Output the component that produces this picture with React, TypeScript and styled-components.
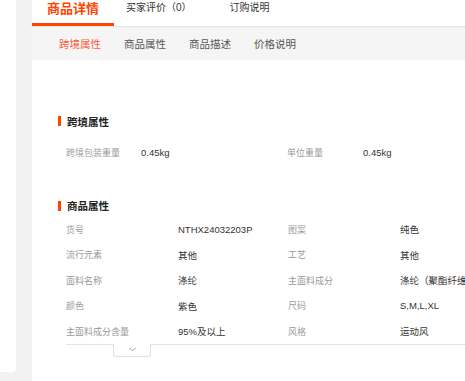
import styled, { createGlobalStyle } from "styled-components";

const GlobalStyle = createGlobalStyle`
  html, body {
    margin: 0;
    padding: 0;
    background: #f2f2f2;
    font-family: "Liberation Sans", "Noto Sans CJK SC", sans-serif;
  }
`;

const Page = styled.div`
  display: flex;
  gap: 16px;
  height: 100vh;
  overflow: hidden;
`;

const SideCard = styled.div`
  width: 16px;
  height: 372px;
  background: #fff;
  border-bottom-right-radius: 4px;
  flex-shrink: 0;
`;

const Main = styled.div`
  flex: 1;
  min-width: 0;
  background: #fff;
  display: flex;
  flex-direction: column;
  overflow: hidden;
`;

const TabBar = styled.div`
  display: flex;
  height: 26px;
  border-bottom: 1px solid #e3e3e3;
  flex-shrink: 0;
`;

const Tab = styled.div<{ $active?: boolean; $offset?: number }>`
  box-sizing: border-box;
  height: 26px;
  margin-left: ${(p) => p.$offset ?? 0}px;
  padding: ${(p) => (p.$active ? "0 15px" : "0")};
  font-size: ${(p) => (p.$active ? "13px" : "10px")};
  font-weight: ${(p) => (p.$active ? 700 : 400)};
  line-height: ${(p) => (p.$active ? "18px" : "16px")};
  color: ${(p) => (p.$active ? "#ff4400" : "#333")};
  border-bottom: ${(p) => (p.$active ? "3px solid #ff4400" : "none")};
  white-space: nowrap;
`;

const SubBar = styled.div`
  display: flex;
  align-items: center;
  gap: 23px;
  height: 33px;
  padding-left: 27px;
  background: #f5f5f5;
  flex-shrink: 0;
`;

const SubTab = styled.div<{ $active?: boolean }>`
  font-size: 10.5px;
  color: ${(p) => (p.$active ? "#ff5a3c" : "#555")};
  white-space: nowrap;
`;

const Section = styled.div<{ $top: number }>`
  margin-top: ${(p) => p.$top}px;
  padding-left: 26px;
`;

const Title = styled.div`
  display: flex;
  align-items: center;
  gap: 6px;
  height: 14px;
  font-size: 10.5px;
  font-weight: 700;
  color: #222;

  &::before {
    content: "";
    width: 3px;
    height: 10px;
    background: #ff4400;
  }
`;

const Grid = styled.div<{ $cols: string; $gap: number }>`
  display: grid;
  grid-template-columns: ${(p) => p.$cols};
  grid-auto-rows: 25.5px;
  align-items: center;
  margin-top: ${(p) => p.$gap}px;
  padding-left: 8px;
  white-space: nowrap;
`;

const Label = styled.div`
  font-size: 9px;
  color: #9a9a9a;
`;

const Value = styled.div`
  font-size: 9.5px;
  color: #333;
  overflow: hidden;
`;

const Footer = styled.div`
  margin-left: 34px;
  border-top: 1px solid #e3e3e3;
`;

const MoreTab = styled.div`
  box-sizing: border-box;
  width: 38px;
  height: 13px;
  margin: -1px 0 0 47px;
  background: #fff;
  border: 1px solid #e0e0e0;
  border-top: none;
  border-radius: 0 0 3px 3px;
  display: flex;
  justify-content: center;
  padding-top: 3px;
`;

type Attr = [string, string];

const crossBorder: Attr[] = [
  ["跨境包装重量", "0.45kg"],
  ["单位重量", "0.45kg"],
];

const product: Attr[] = [
  ["货号", "NTHX24032203P"],
  ["图案", "纯色"],
  ["流行元素", "其他"],
  ["工艺", "其他"],
  ["面料名称", "涤纶"],
  ["主面料成分", "涤纶（聚酯纤维）"],
  ["颜色", "紫色"],
  ["尺码", "S,M,L,XL"],
  ["主面料成分含量", "95%及以上"],
  ["风格", "运动风"],
];

function AttrGrid({ items, cols, gap }: { items: Attr[]; cols: string; gap: number }) {
  return (
    <Grid $cols={cols} $gap={gap}>
      {items.map(([k, v]) => [<Label key={k + "l"}>{k}</Label>, <Value key={k + "v"}>{v}</Value>])}
    </Grid>
  );
}

export default function App() {
  return (
    <>
      <GlobalStyle />
      <Page>
        <SideCard />
        <Main>
          <TabBar>
            <Tab $active>商品详情</Tab>
            <Tab $offset={12}>买家评价（0）</Tab>
            <Tab $offset={38}>订购说明</Tab>
          </TabBar>

          <SubBar>
            <SubTab $active>跨境属性</SubTab>
            <SubTab>商品属性</SubTab>
            <SubTab>商品描述</SubTab>
            <SubTab>价格说明</SubTab>
          </SubBar>

          <Section $top={54}>
            <Title>跨境属性</Title>
            <AttrGrid items={crossBorder} cols="75px 146px 76px 1fr" gap={12} />
          </Section>

          <Section $top={33}>
            <Title>商品属性</Title>
            <AttrGrid items={product} cols="112px 110px 112px 1fr" gap={4} />
          </Section>

          <Footer>
            <MoreTab>
              <svg width="7" height="5" viewBox="0 0 7 5" fill="none">
                <path d="M0.5 0.8 L3.5 3.8 L6.5 0.8" stroke="#999" strokeWidth="1" />
              </svg>
            </MoreTab>
          </Footer>
        </Main>
      </Page>
    </>
  );
}
